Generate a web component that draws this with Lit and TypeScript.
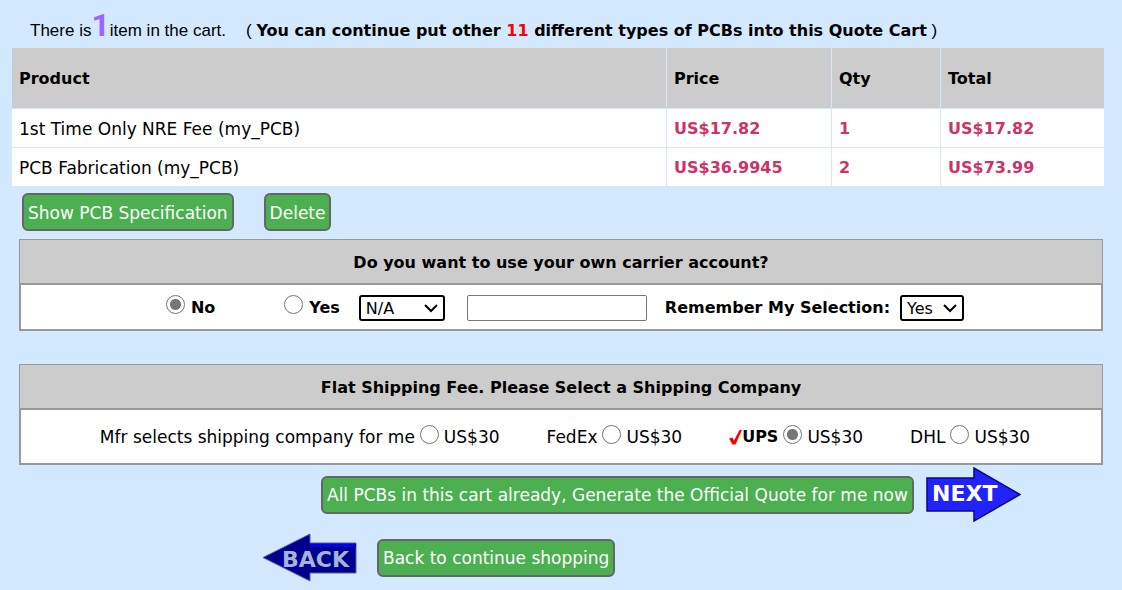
import { LitElement, html, css } from "lit";
import { customElement, state } from "lit/decorators.js";

interface CartLine {
  product: string;
  price: string;
  qty: number;
  total: string;
}

interface Shipper {
  id: string;
  name: string;
  fee: string;
}

@customElement("app-root")
export class AppRoot extends LitElement {
  static styles = css`
    :host {
      display: block;
      box-sizing: border-box;
      min-height: 100vh;
      padding: 8px 18px 8px 12px;
      background: #d3e9ff;
      color: #000;
      font: 16px/20px Verdana, "DejaVu Sans", sans-serif;
    }
    .intro {
      display: flex;
      align-items: baseline;
      height: 40px;
      margin: 0;
      padding-left: 18px;
      font-family: Arial, "Liberation Sans", sans-serif;
      font-size: 17px;
      line-height: 34px;
      white-space: pre;
    }
    .count {
      font-family: Roboto, sans-serif;
      font-size: 32px;
      font-weight: bold;
      color: #9966ff;
    }
    .note {
      margin-left: 20px;
    }
    .note strong {
      font-family: Verdana, "DejaVu Sans", sans-serif;
      font-size: 16px;
    }
    .limit {
      color: #f00;
    }
    .cart {
      width: 100%;
      border-collapse: separate;
      border-spacing: 0;
      table-layout: fixed;
    }
    .cart th,
    .cart td {
      box-sizing: border-box;
      padding: 1px 7px 0;
      text-align: left;
    }
    .cart th {
      height: 60px;
      background: #ccc;
    }
    .cart td {
      height: 39px;
      border-top: 1px solid #d3e9ff;
      background: #fff;
      font-size: 17px;
    }
    .cart th + th,
    .cart td + td {
      border-left: 1px solid #d3e9ff;
    }
    .cart td + td {
      font-size: 16px;
      font-weight: bold;
      color: #cc3366;
    }
    .price {
      width: 165px;
    }
    .qty {
      width: 109px;
    }
    .total {
      width: 164px;
    }
    .tools {
      display: flex;
      gap: 30px;
      padding: 7px 10px 8px;
    }
    .btn {
      height: 38px;
      padding: 1px 4px 0;
      border: 2px solid #666;
      border-radius: 6px;
      background: #4caf50;
      color: #fff;
      font: inherit;
      font-size: 17px;
      cursor: pointer;
    }
    .panel {
      margin: 0 1px 33px 7px;
    }
    .panel.last {
      margin-bottom: 2px;
    }
    .panel h2 {
      margin: 0;
      padding: 13px 0 10px;
      border: 1px solid #999;
      border-bottom: 0;
      background: #ccc;
      font-size: 16px;
      line-height: 20px;
      text-align: center;
    }
    .options {
      display: flex;
      align-items: center;
      justify-content: center;
      box-sizing: border-box;
      height: 48px;
      padding-top: 1px;
      padding-left: 8px;
      border: 2px solid #999;
      background: #fff;
      white-space: nowrap;
    }
    .shippers {
      gap: 47px;
      height: 57px;
      font-size: 17px;
    }
    .choice {
      display: flex;
      align-items: center;
      gap: 5px;
    }
    .choice input {
      width: 19px;
      height: 19px;
      margin: 0 0 6px;
      appearance: none;
      border: 1px solid #767676;
      border-radius: 50%;
      background: #fff;
    }
    .choice input:checked {
      background: radial-gradient(circle, #767676 5px, #fff 6px);
    }
    .bold {
      font-size: 16px;
      font-weight: bold;
    }
    .choice.bold {
      gap: 6px;
    }
    .no {
      margin-right: 69px;
    }
    .tick {
      display: block;
      width: 13px;
      height: 15px;
      margin-right: -5px;
    }
    .pick {
      box-sizing: border-box;
      height: 26px;
      padding: 2px 20px 0 5px;
      appearance: none;
      border: 2px solid #000;
      border-radius: 3px;
      background: #fff
        url("data:image/svg+xml,%3Csvg xmlns='http://www.w3.org/2000/svg' width='14' height='9'%3E%3Cpath d='M1 1l6 6 6-6' fill='none' stroke='%23000' stroke-width='2'/%3E%3C/svg%3E")
        no-repeat right 5px top 7px;
      color: #000;
      font: inherit;
    }
    .carrier {
      width: 86px;
      margin: 0 22px 0 19px;
    }
    .remember {
      width: 64px;
      margin-left: 10px;
    }
    .account {
      box-sizing: border-box;
      width: 180px;
      height: 26px;
      margin-right: 18px;
      border: 1px solid #767676;
      border-radius: 2px;
      background: #fff;
      font: inherit;
    }
    .actions {
      display: flex;
      align-items: center;
      height: 55px;
      margin-bottom: 8px;
    }
    .forward {
      gap: 12px;
      padding-left: 309px;
    }
    .backward {
      gap: 20px;
      padding-left: 250px;
    }
    .arrow,
    .arrow svg {
      display: block;
    }
    .arrow text {
      font: bold 22px Verdana, "DejaVu Sans", sans-serif;
    }
  `;

  @state() private ownAccount = false;
  @state() private shipper = "ups";

  private lines: CartLine[] = [
    { product: "1st Time Only NRE Fee (my_PCB)", price: "US$17.82", qty: 1, total: "US$17.82" },
    { product: "PCB Fabrication (my_PCB)", price: "US$36.9945", qty: 2, total: "US$73.99" },
  ];

  private shippers: Shipper[] = [
    { id: "mfr", name: "Mfr selects shipping company for me", fee: "US$30" },
    { id: "fedex", name: "FedEx", fee: "US$30" },
    { id: "ups", name: "UPS", fee: "US$30" },
    { id: "dhl", name: "DHL", fee: "US$30" },
  ];

  private renderShipper(s: Shipper) {
    const on = s.id === this.shipper;
    return html`<label class="choice">
      ${on
        ? html`<svg class="tick" viewBox="0 0 13 15" aria-hidden="true">
            <path fill="#f00" d="M0 8.500l3.500-1 1.500 3L10.500 0H13L6.500 14.500H3.500z" />
          </svg>`
        : ""}
      <span class=${on ? "bold" : ""}>${s.name}</span>
      <input
        type="radio"
        name="shipper"
        .checked=${on}
        @change=${() => (this.shipper = s.id)}
      />
      <span>${s.fee}</span>
    </label>`;
  }

  render() {
    return html`
      <p class="intro"><span>There is</span><span class="count">1</span><span>item in the cart.</span><span class="note">( <strong>You can continue put other <span class="limit">11</span> different types of PCBs into this Quote Cart</strong> )</span></p>

      <table class="cart">
        <thead>
          <tr>
            <th>Product</th>
            <th class="price">Price</th>
            <th class="qty">Qty</th>
            <th class="total">Total</th>
          </tr>
        </thead>
        <tbody>
          ${this.lines.map(
            (l) => html`<tr>
              <td>${l.product}</td>
              <td>${l.price}</td>
              <td>${l.qty}</td>
              <td>${l.total}</td>
            </tr>`
          )}
        </tbody>
      </table>

      <div class="tools">
        <button class="btn" type="button">Show PCB Specification</button>
        <button class="btn" type="button">Delete</button>
      </div>

      <section class="panel">
        <h2>Do you want to use your own carrier account?</h2>
        <div class="options">
          <label class="choice bold no">
            <input type="radio" name="own" .checked=${!this.ownAccount} @change=${() => (this.ownAccount = false)} />
            <span>No</span>
          </label>
          <label class="choice bold">
            <input type="radio" name="own" .checked=${this.ownAccount} @change=${() => (this.ownAccount = true)} />
            <span>Yes</span>
          </label>
          <select class="pick carrier" aria-label="Carrier">
            <option>N/A</option>
            <option>UPS</option>
            <option>DHL</option>
          </select>
          <input class="account" type="text" aria-label="Carrier account number" />
          <label class="bold" for="remember">Remember My Selection:</label>
          <select class="pick remember" id="remember">
            <option>Yes</option>
            <option>No</option>
          </select>
        </div>
      </section>

      <section class="panel last">
        <h2>Flat Shipping Fee. Please Select a Shipping Company</h2>
        <div class="options shippers">${this.shippers.map((s) => this.renderShipper(s))}</div>
      </section>

      <div class="actions forward">
        <button class="btn" type="button">All PCBs in this cart already, Generate the Official Quote for me now</button>
        <a class="arrow" href="#next">
          <svg width="95" height="55" viewBox="0 0 95 55">
            <path d="M1 11h47V1l46 26.500L48 54V44H1z" fill="#2222ff" stroke="#0a0a80" stroke-width="1.500" />
            <text x="6" y="34" fill="#fff">NEXT</text>
          </svg>
        </a>
      </div>

      <div class="actions backward">
        <a class="arrow" href="#back">
          <svg width="95" height="49" viewBox="0 0 95 49">
            <path d="M1 24.500L48 1v9h46v30H48v8z" fill="#00008f" stroke="#5a5ab0" />
            <path d="M48 11h46v3H48z" fill="#0000f0" />
            <text x="20" y="34" fill="#a3b4dc">BACK</text>
          </svg>
        </a>
        <button class="btn" type="button">Back to continue shopping</button>
      </div>
    `;
  }
}
